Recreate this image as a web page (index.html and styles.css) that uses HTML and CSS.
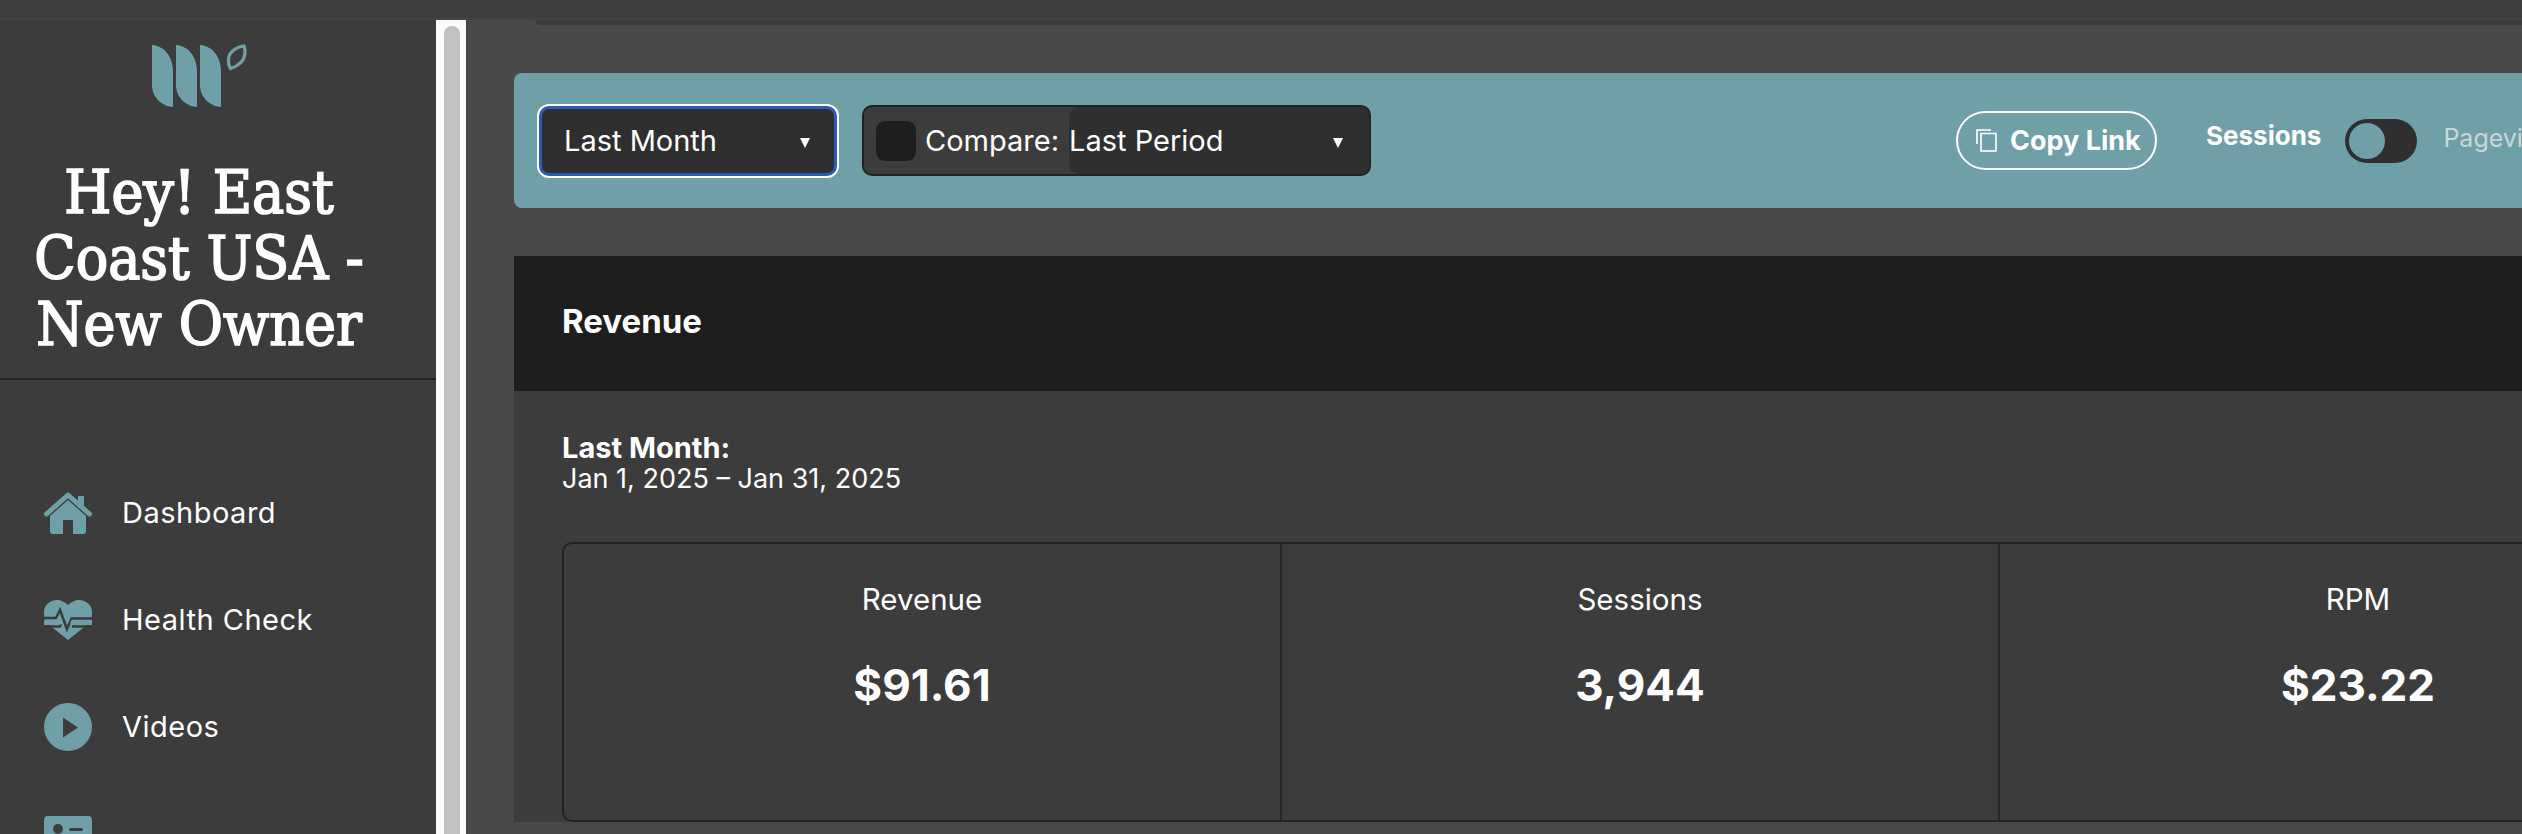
FILE: index.html
```html
<!DOCTYPE html>
<html lang="en">
<head>
<meta charset="utf-8">
<title>Dashboard</title>
<link rel="stylesheet" href="styles.css">
</head>
<body>
<div class="topbar"></div>
<div class="layout">
  <aside class="sidebar">
    <div class="brand">
      <svg class="logo" viewBox="152 44 95 64" aria-hidden="true">
        <path class="teal" d="M152 45C164 46 173 56 173 72V107C161 106 152 97 152 85Z"/>
        <path class="teal" d="M176 45C188 46 197 56 197 72V107C185 106 176 97 176 85Z"/>
        <path class="teal" d="M200 45C212 46 221 56 221 72V107C209 106 200 97 200 85Z"/>
        <path class="leaf" d="M244 46C236 47 229 52 228.500 59C228.300 63 229 66 230.500 68.500C238 66 244.500 61 245 53C245.200 50 244.800 48 244 46Z"/>
      </svg>
      <h1 class="site-title">Hey! East<br>Coast USA -<br>New Owner</h1>
    </div>
    <nav class="nav">
      <a class="nav-item">
        <svg class="nav-icon" viewBox="44 490 48 44" aria-hidden="true">
          <path class="teal" d="M68 499L50 515V530Q50 533 53 533H63V519H73V533H83Q86 533 86 530V515Z"/>
          <rect class="teal" x="78" y="495" width="6" height="12"/>
          <path class="roof" d="M46.500 513L68 494L89.500 513"/>
        </svg>
        <span>Dashboard</span>
      </a>
      <a class="nav-item">
        <svg class="nav-icon" viewBox="44 596 48 44" aria-hidden="true">
          <path class="teal" d="M68 638L48 622C44 618 44 613 44 610C44 603 50 598 57 598C61 598 65 600 68 603C71 600 75 598 79 598C86 598 92 603 92 610C92 613 92 618 88 622Z"/>
          <path class="pulse" d="M42 616H56L60 608L67 627L71.500 616.500H94"/>
          <path class="pulse" d="M42 624.500H60L61 622M72 624.500H94"/>
          <path class="bar" d="M45 620.500H59M73 620.500H91"/>
        </svg>
        <span>Health Check</span>
      </a>
      <a class="nav-item">
        <svg class="nav-icon" viewBox="44 702 48 48" aria-hidden="true">
          <circle class="teal" cx="68" cy="726" r="24"/>
          <path class="cut" d="M63 716.500L78 726.500L63 736.500Z"/>
        </svg>
        <span>Videos</span>
      </a>
      <a class="nav-item">
        <svg class="nav-icon" viewBox="44 814 48 36" aria-hidden="true">
          <rect class="teal" x="44" y="814" width="48" height="36" rx="4"/>
          <circle class="cut" cx="58" cy="827" r="5"/>
          <rect class="cut" x="69" y="826" width="14" height="3" rx="1.500"/>
        </svg>
      </a>
    </nav>
  </aside>
  <div class="scrollbar"><div class="scroll-thumb"></div></div>
  <main class="main">
    <div class="lip"></div>
    <section class="toolbar">
      <div class="select select-focus">
        <span>Last Month</span>
        <i class="caret"></i>
      </div>
      <div class="compare">
        <span class="checkbox"></span>
        <span class="compare-label">Compare:</span>
        <div class="compare-select">
          <span>Last Period</span>
          <i class="caret"></i>
        </div>
      </div>
      <button class="copy-link" type="button">
        <svg class="copy-icon" viewBox="0 0 21 23" aria-hidden="true">
          <rect x="5" y="4.500" width="15" height="17.500"/>
          <path d="M1 15V1H15"/>
        </svg>
        Copy Link
      </button>
      <span class="metric-on">Sessions</span>
      <span class="toggle"><span class="knob"></span></span>
      <span class="metric-off">Pageviews</span>
    </section>
    <section class="card">
      <h2 class="card-head">Revenue</h2>
      <div class="card-body">
        <p class="period"><strong>Last Month:</strong><br>Jan 1, 2025 – Jan 31, 2025</p>
        <div class="stats">
          <div class="stat"><div class="stat-label">Revenue</div><div class="stat-value">$91.61</div></div>
          <div class="stat"><div class="stat-label">Sessions</div><div class="stat-value">3,944</div></div>
          <div class="stat"><div class="stat-label">RPM</div><div class="stat-value">$23.22</div></div>
        </div>
      </div>
    </section>
  </main>
</div>
</body>
</html>
```
FILE: styles.css
```css
* { box-sizing: border-box; }
html, body { margin: 0; height: 100%; overflow: hidden; }
body {
  background: #3c3c3c;
  color: #fff;
  font-family: "Inter", "Open Sans", sans-serif;
}
.topbar {
  height: 20px;
  background: #3e3e3e;
  border-bottom: 2px solid #434343;
}
.layout { display: flex; height: 814px; overflow: hidden; }

.sidebar { flex: 0 0 436px; width: 436px; min-width: 0; background: #3c3c3c; overflow: hidden; }
.brand {
  height: 360px;
  border-bottom: 2px solid #222;
  padding: 24px 38px 0 0;
  text-align: center;
}
.logo { display: block; width: 95px; height: 64px; margin: 0 auto; }
.teal { fill: #6fa0a7; }
.cut { fill: #3c3c3c; }
.leaf { fill: none; stroke: #6fa0a7; stroke-width: 3.200; }
.roof { fill: none; stroke: #6fa0a7; stroke-width: 5; stroke-linecap: round; stroke-linejoin: round; }
.pulse { fill: none; stroke: #3c3c3c; stroke-width: 2.500; }
.bar { fill: none; stroke: #6fa0a7; stroke-width: 5; stroke-linecap: round; }
.site-title {
  margin: 51px 0 0;
  font: 400 60px/66px "DejaVu Serif", "Liberation Serif", serif;
  font-stretch: condensed;
  letter-spacing: 0;
  -webkit-text-stroke: 1.700px #fff;
  white-space: nowrap;
}
.nav { padding: 79px 0 0 44px; }
.nav-item {
  display: flex;
  align-items: center;
  gap: 30px;
  height: 107px;
  font-size: 29px;
  letter-spacing: 0.5px;
}
.nav-icon { flex: 0 0 48px; width: 48px; height: auto; }

.scrollbar {
  flex: 0 0 30px;
  padding: 6px 6px 0 8px;
  background: #fafafa;
}
.scroll-thumb {
  width: 16px;
  height: 900px;
  border-radius: 8px 8px 0 0;
  background: #c1c1c1;
}

.main { flex: 1; min-width: 0; overflow: hidden; background: #494949; padding-left: 48px; }
.lip {
  height: 5px;
  margin: 0 0 48px 21px;
  width: 2200px;
  background: #3c3c3c;
  border-radius: 0 0 0 14px;
}

.toolbar {
  display: flex;
  align-items: center;
  width: 2300px;
  height: 135px;
  padding-left: 23px;
  background: #6fa0a7;
  border-radius: 8px 0 0 8px;
  font-size: 29px;
}
.select {
  display: flex;
  align-items: center;
  justify-content: space-between;
  width: 298px;
  height: 70px;
  padding: 0 24px 0 22px;
  background: #2f2f2f;
  border: 3px solid #2a5bc0;
  border-radius: 10px;
  box-shadow: 0 0 0 2px #fff;
}
.select-focus { margin-left: 2px; }
.caret {
  flex: none;
  width: 0;
  height: 0;
  margin-top: 4px;
  border-left: 5.500px solid transparent;
  border-right: 5.500px solid transparent;
  border-top: 10px solid #fff;
}
.compare {
  display: flex;
  align-items: center;
  width: 509px;
  height: 71px;
  margin-left: 25px;
  padding-left: 12px;
  background: #3c3c3c;
  border: 2px solid #222;
  border-radius: 10px;
}
.checkbox { flex: none; width: 40px; height: 40px; margin-right: 9px; background: #1e1e1e; border-radius: 9px; }
.compare-label { flex: none; width: 144px; }
.compare-select {
  display: flex;
  align-items: center;
  justify-content: space-between;
  flex: 1;
  height: 67px;
  padding: 0 26px 0 0;
  background: #2f2f2f;
  border-radius: 10px 8px 8px 10px;
}

.copy-link {
  display: flex;
  align-items: center;
  width: 201px;
  height: 59px;
  margin-left: 585px;
  padding: 0 0 0 18px;
  background: none;
  border: 2px solid #fff;
  border-radius: 30px;
  color: #fff;
  font: 700 27px "Inter", sans-serif;
  white-space: nowrap;
}
.copy-icon { flex: none; width: 21px; height: 23px; margin-right: 13px; fill: none; stroke: #fff; stroke-width: 1.600; }
.metric-on { margin: -10px 0 0 49px; font-size: 26px; font-weight: 700; }
.toggle {
  display: flex;
  align-items: center;
  flex: none;
  width: 72px;
  height: 44px;
  margin: 0 26px 0 24px;
  padding-left: 4px;
  background: #2f2f2f;
  border-radius: 22px;
}
.knob { width: 36px; height: 36px; border-radius: 50%; background: #6fa0a7; }
.metric-off { margin-top: -6px; color: #c9d6d8; font-size: 25px; }

.card { width: 2300px; min-height: 500px; margin-top: 48px; background: #3c3c3c; }
.card-head {
  display: flex;
  align-items: center;
  height: 135px;
  margin: 0;
  padding: 0 0 6px 48px;
  background: #1e1e1e;
  font-size: 33px;
  font-weight: 700;
}
.card-body { padding: 42px 0 0 48px; }
.period { margin: 0; font-size: 27px; line-height: 30px; }
.period strong { font-size: 29px; font-weight: 700; }
.stats {
  display: grid;
  grid-template-columns: 718px 718px 718px;
  height: 280px;
  margin-top: 48px;
  border: 2px solid #222;
  border-radius: 10px;
  text-align: center;
}
.stat { padding-top: 37px; border-right: 2px solid #262626; }
.stat-label { font-size: 29.500px; line-height: 36px; }
.stat-value { margin-top: 40px; font-size: 44px; font-weight: 700; line-height: 56px; }
```
